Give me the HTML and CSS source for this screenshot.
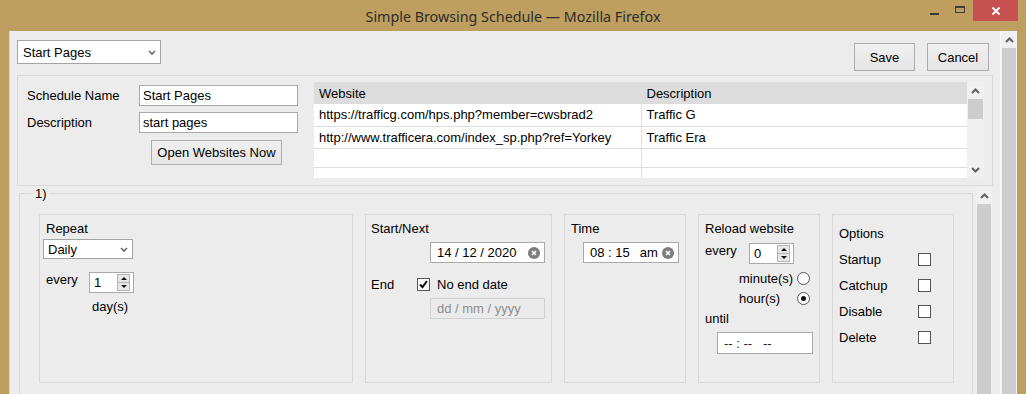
FILE: index.html
```html
<!DOCTYPE html>
<html lang="en">
<head>
    <meta charset="UTF-8">
    <title>Simple Browsing Schedule</title>
    <link rel="stylesheet" href="styles.css">
</head>
<body>
<div class="window">
    <div class="titlebar">
        <div class="title">Simple Browsing Schedule — Mozilla Firefox</div>
        <div class="controls">
            <span class="ctl min"><i></i></span>
            <span class="ctl max"><i></i></span>
            <span class="ctl close">
                <svg width="10" height="10" viewBox="0 0 10 10"><path d="M1.5 1.5l7 7M8.5 1.5l-7 7" stroke="#fff" stroke-width="1.8" fill="none"/></svg>
            </span>
        </div>
    </div>
    <div class="client">
        <div class="page">
            <!-- schedule picker + save/cancel -->
            <div class="toolbar">
                <div class="select sched-select">
                    <span>Start Pages</span>
                    <svg width="8" height="5" viewBox="0 0 8 5"><path d="M1 1l3 3 3-3" fill="none" stroke="#666" stroke-width="1.6"/></svg>
                </div>
                <div class="actions">
                    <button class="btn save">Save</button>
                    <button class="btn cancel">Cancel</button>
                </div>
            </div>

            <div class="panel top-panel">
                <div class="details">
                    <label>Schedule Name</label>
                    <input class="field" type="text" value="Start Pages">
                    <label>Description</label>
                    <input class="field" type="text" value="start pages">
                    <button class="btn open">Open Websites Now</button>
                </div>
                <div class="sites">
                    <table class="site-table">
                        <thead>
                        <tr><th class="col-url">Website</th><th>Description</th></tr>
                        </thead>
                        <tbody>
                        <tr><td>https://trafficg.com/hps.php?member=cwsbrad2</td><td>Traffic G</td></tr>
                        <tr><td>http://www.trafficera.com/index_sp.php?ref=Yorkey</td><td>Traffic Era</td></tr>
                        <tr class="empty"><td></td><td></td></tr>
                        <tr class="empty"><td></td><td></td></tr>
                        </tbody>
                    </table>
                    <div class="scrollbar table-scroll">
                        <span class="arrow"><svg width="9" height="6" viewBox="0 0 9 6"><path d="M1 5l3.5-3.5L8 5" fill="none" stroke="#606060" stroke-width="2"/></svg></span>
                        <span class="thumb short"></span>
                        <span class="track"></span>
                        <span class="arrow"><svg width="9" height="6" viewBox="0 0 9 6"><path d="M1 1l3.5 3.5L8 1" fill="none" stroke="#606060" stroke-width="2"/></svg></span>
                    </div>
                </div>
            </div>

            <div class="lower">
                <fieldset class="entry">
                    <legend>1)</legend>
                    <div class="boxes">
                        <div class="box repeat">
                            <div class="cap">Repeat</div>
                            <div class="select daily">
                                <span>Daily</span>
                                <svg width="8" height="5" viewBox="0 0 8 5"><path d="M1 1l3 3 3-3" fill="none" stroke="#666" stroke-width="1.6"/></svg>
                            </div>
                            <div class="row every-row">
                                <span class="lbl every">every</span>
                                <div class="number"><span>1</span>
                                    <span class="spin"><i class="up"></i><i class="down"></i></span>
                                </div>
                            </div>
                            <div class="unit">day(s)</div>
                        </div>

                        <div class="box start">
                            <div class="cap">Start/Next</div>
                            <div class="date start-date"><span>14 / 12 / 2020</span>
                                <svg width="12" height="12" viewBox="0 0 12 12"><circle cx="6" cy="6" r="6" fill="#7d7d7d"/><path d="M4 4l4 4M8 4l-4 4" stroke="#fff" stroke-width="1.7"/></svg>
                            </div>
                            <div class="row end-row">
                                <span class="lbl end">End</span>
                                <span class="check on">
                                    <svg width="11" height="11" viewBox="0 0 11 11"><path d="M2 5.5l2.5 2.7L9 2" fill="none" stroke="#111" stroke-width="2"/></svg>
                                </span>
                                <span class="check-text">No end date</span>
                            </div>
                            <div class="date disabled"><span>dd / mm / yyyy</span></div>
                        </div>

                        <div class="box time">
                            <div class="cap">Time</div>
                            <div class="date time-input">
                                <span class="hm">08 : 15</span><span class="ampm">am</span>
                                <svg width="12" height="12" viewBox="0 0 12 12"><circle cx="6" cy="6" r="6" fill="#7d7d7d"/><path d="M4 4l4 4M8 4l-4 4" stroke="#fff" stroke-width="1.7"/></svg>
                            </div>
                        </div>

                        <div class="box reload">
                            <div class="cap">Reload website</div>
                            <div class="row reload-every">
                                <span class="lbl every2">every</span>
                                <div class="number"><span>0</span>
                                    <span class="spin"><i class="up"></i><i class="down"></i></span>
                                </div>
                            </div>
                            <div class="row radio-row first">
                                <span class="radio-text">minute(s)</span><span class="radio"></span>
                            </div>
                            <div class="row radio-row">
                                <span class="radio-text">hour(s)</span><span class="radio on"></span>
                            </div>
                            <div class="until">until</div>
                            <div class="date until-input"><span>-- : -- &nbsp; --</span></div>
                        </div>

                        <div class="box options">
                            <div class="cap opt-cap">Options</div>
                            <div class="opt"><span>Startup</span><span class="check"></span></div>
                            <div class="opt"><span>Catchup</span><span class="check"></span></div>
                            <div class="opt"><span>Disable</span><span class="check"></span></div>
                            <div class="opt"><span>Delete</span><span class="check"></span></div>
                        </div>
                    </div>
                </fieldset>
                <div class="scrollbar lower-scroll">
                    <span class="arrow"><svg width="9" height="6" viewBox="0 0 9 6"><path d="M1 5l3.5-3.5L8 5" fill="none" stroke="#606060" stroke-width="2"/></svg></span>
                    <span class="thumb"></span>
                </div>
            </div>
        </div>
        <div class="scrollbar page-scroll">
            <span class="arrow"><svg width="9" height="6" viewBox="0 0 9 6"><path d="M1 5l3.5-3.5L8 5" fill="none" stroke="#606060" stroke-width="2"/></svg></span>
            <span class="thumb"></span>
        </div>
    </div>
</div>
</body>
</html>
```

FILE: styles.css
```css
* {
    margin: 0;
    padding: 0;
    box-sizing: border-box;
}
body {
    background: #bf9f5f;
    font-family: "Liberation Sans", Arial, sans-serif;
    font-size: 13px;
    color: #000;
}
.window {
    width: 1026px;
    height: 394px;
    background: #bf9f5f;
    overflow: hidden;
    display: flex;
    flex-direction: column;
}

/* title bar */
.titlebar {
    height: 31px;
    display: grid;
    grid-template-columns: 1fr auto 1fr;
}
.title {
    grid-column: 2;
    font-family: "Noto Sans", sans-serif;
    font-size: 14.3px;
    color: #2c2c2c;
    line-height: 31px;
    padding-top: 1px;
}
.controls {
    grid-column: 3;
    justify-self: end;
    display: flex;
    align-items: flex-start;
    margin-right: 8px;
}
.ctl {
    display: flex;
    align-items: center;
    justify-content: center;
    height: 21px;
}
.ctl.min {
    width: 31px;
}
.ctl.min i {
    display: block;
    width: 9px;
    height: 2px;
    margin-top: 6px;
    background: #3a3a3a;
}
.ctl.max {
    width: 19px;
    margin-right: 4px;
}
.ctl.max i {
    display: block;
    width: 10px;
    height: 7px;
    margin-top: -2px;
    border: 1px solid #3a3a3a;
    border-top-width: 2px;
}
.ctl.close {
    width: 45px;
    background: #c75050;
}

/* client area */
.client {
    flex: 1;
    display: flex;
    margin: 0 9px;
    min-height: 0;
}
.page {
    flex: 1;
    background: #ececec;
    border-left: 1px solid #d6d6d6;
    display: flex;
    flex-direction: column;
    min-height: 0;
}

.toolbar {
    height: 44px;
    display: flex;
    justify-content: space-between;
    align-items: flex-start;
    padding: 9px 11px 0 7px;
}
.actions {
    display: flex;
    gap: 12px;
    margin-top: 3px;
}

.select {
    display: flex;
    align-items: center;
    justify-content: space-between;
    background: #fff;
    border: 1px solid #a4a4a4;
}
.sched-select {
    width: 144px;
    height: 24px;
    padding: 0 4px 0 5px;
}
.btn {
    font-family: "Liberation Sans", Arial, sans-serif;
    font-size: 13px;
    color: #000;
    border: 1px solid #acacac;
    background: linear-gradient(#f0f0f0, #e5e5e5);
}
.btn.save {
    width: 61px;
    height: 28px;
}
.btn.cancel {
    width: 62px;
    height: 28px;
}

/* upper panel */
.panel {
    border: 1px solid #d8d8d8;
}
.top-panel {
    height: 111px;
    margin: 0 7px 0 7px;
    display: flex;
    padding: 6px 8px 0 9px;
}
.details {
    width: 287px;
    display: grid;
    grid-template-columns: 112px 159px;
    grid-auto-rows: min-content;
    row-gap: 6px;
    align-items: center;
    padding-top: 3px;
}
.field {
    height: 21px;
    border: 1px solid #a9a9a9;
    padding: 0 3px;
    font-family: "Liberation Sans", Arial, sans-serif;
    font-size: 13px;
    color: #000;
    background: #fff;
}
.btn.open {
    grid-column: 2;
    justify-self: start;
    width: 131px;
    height: 25px;
    margin: 1px 0 0 12px;
}

.sites {
    display: flex;
    height: 96px;
    overflow: hidden;
}
.site-table {
    width: 653px;
    border-collapse: collapse;
    background: #fff;
    align-self: flex-start;
}
.site-table th {
    height: 22px;
    background: #dcdcdc;
    font-weight: normal;
    text-align: left;
    padding: 0 5px;
}
.site-table th.col-url {
    width: 327px;
}
.site-table td {
    height: 22px;
    padding: 0 5px;
    border-bottom: 1px solid #dedede;
}
.site-table tr.empty td {
    height: 19px;
}
.site-table td + td,
.site-table th + th {
    border-left: 1px solid #dedede;
}

/* scrollbars */
.scrollbar {
    width: 17px;
    display: flex;
    flex-direction: column;
    background: #f0f0f0;
}
.scrollbar .arrow {
    height: 17px;
    flex: none;
    display: flex;
    align-items: center;
    justify-content: center;
}
.scrollbar .thumb {
    flex: 1;
    margin: 0 1px;
    background: #cdcdcd;
}
.scrollbar .thumb.short {
    flex: none;
    height: 20px;
}
.scrollbar .track {
    flex: 1;
}
.page-scroll {
    border-left: 1px solid #fafafa;
}

/* lower schedule entry */
.lower {
    flex: 1;
    min-height: 0;
    display: flex;
    margin: 1px 8px 0 9px;
}
.entry {
    flex: 1;
    border: 1px solid #d8d8d8;
    border-bottom: none;
    padding: 14px 18px 0 19px;
    margin-right: 3px;
}
.entry legend {
    margin-left: -6px;
    padding: 0 2px;
    line-height: 13px;
}
.lower-scroll {
    width: 16px;
}

.boxes {
    display: flex;
    gap: 12px;
}
.box {
    height: 169px;
    border: 1px solid #d8d8d8;
    padding: 6px 6px 0 6px;
    display: flex;
    flex-direction: column;
    align-items: flex-start;
}
.cap {
    line-height: 15px;
}
.box.repeat { width: 314px; }
.box.start { width: 187px; padding-left: 5px; }
.box.time { width: 122px; }
.box.reload { width: 122px; }
.box.options { width: 122px; }

.row {
    display: flex;
    align-items: flex-start;
}
.lbl {
    line-height: 15px;
}

.daily {
    width: 90px;
    height: 20px;
    margin: 3px 0 0 -3px;
    padding: 0 4px 0 4px;
}
.every-row {
    margin-top: 13px;
}
.every {
    width: 43px;
}
.number {
    width: 45px;
    height: 21px;
    border: 1px solid #a9a9a9;
    background: #fff;
    display: flex;
    align-items: center;
    justify-content: space-between;
    padding: 0 3px 0 4px;
}
.spin {
    width: 13px;
    height: 17px;
    display: flex;
    flex-direction: column;
    border: 1px solid #b4b4b4;
    background: #e6e6e6;
}
.spin i {
    flex: 1;
    display: flex;
    align-items: center;
    justify-content: center;
}
.spin i.up {
    border-bottom: 1px solid #b4b4b4;
}
.spin i.up::after {
    content: "";
    border: 3px solid transparent;
    border-top: none;
    border-bottom: 3px solid #111;
}
.spin i.down::after {
    content: "";
    border: 3px solid transparent;
    border-bottom: none;
    border-top: 3px solid #111;
}
.unit {
    margin: 6px 0 0 46px;
    line-height: 15px;
}

.date {
    height: 21px;
    border: 1px solid #a9a9a9;
    background: #fff;
    display: flex;
    align-items: center;
    justify-content: space-between;
    padding: 0 4px 0 6px;
}
.start-date {
    width: 115px;
    margin: 6px 0 0 59px;
}
.end-row {
    margin-top: 14px;
    align-items: center;
}
.end {
    width: 46px;
}
.check {
    width: 13px;
    height: 13px;
    border: 1px solid #555;
    background: #fff;
    display: flex;
    align-items: center;
    justify-content: center;
    flex: none;
}
.check-text {
    margin-left: 7px;
}
.date.disabled {
    width: 115px;
    margin: 6px 0 0 59px;
    background: #ebebeb;
    border-color: #d2d2d2;
    color: #8d8d8d;
}
.time-input {
    width: 96px;
    margin: 6px 0 0 12px;
    padding-left: 6px;
    justify-content: flex-start;
}
.time-input .ampm {
    margin-left: 10px;
}
.time-input svg {
    margin-left: auto;
}

.reload-every {
    margin-top: 7px;
}
.every2 {
    width: 44px;
    line-height: 15px;
}
.radio-row {
    margin: 5px 0 0 34px;
    align-items: center;
    line-height: 15px;
}
.radio-row.first {
    margin-top: 7px;
}
.radio-text {
    width: 58px;
}
.radio {
    width: 13px;
    height: 13px;
    border: 1px solid #555;
    border-radius: 50%;
    background: #fff;
    display: flex;
    align-items: center;
    justify-content: center;
}
.radio.on::after {
    content: "";
    width: 5px;
    height: 5px;
    border-radius: 50%;
    background: #111;
}
.until {
    margin-top: 5px;
    line-height: 15px;
}
.until-input {
    width: 96px;
    height: 22px;
    margin: 6px 0 0 12px;
    color: #222;
}

.opt-cap {
    margin-top: 5px;
}
.opt {
    display: flex;
    align-items: center;
    height: 15px;
    margin-top: 11px;
}
.opt span:first-child {
    width: 79px;
}
.opt + .opt {
    margin-top: 11px;
}
```
